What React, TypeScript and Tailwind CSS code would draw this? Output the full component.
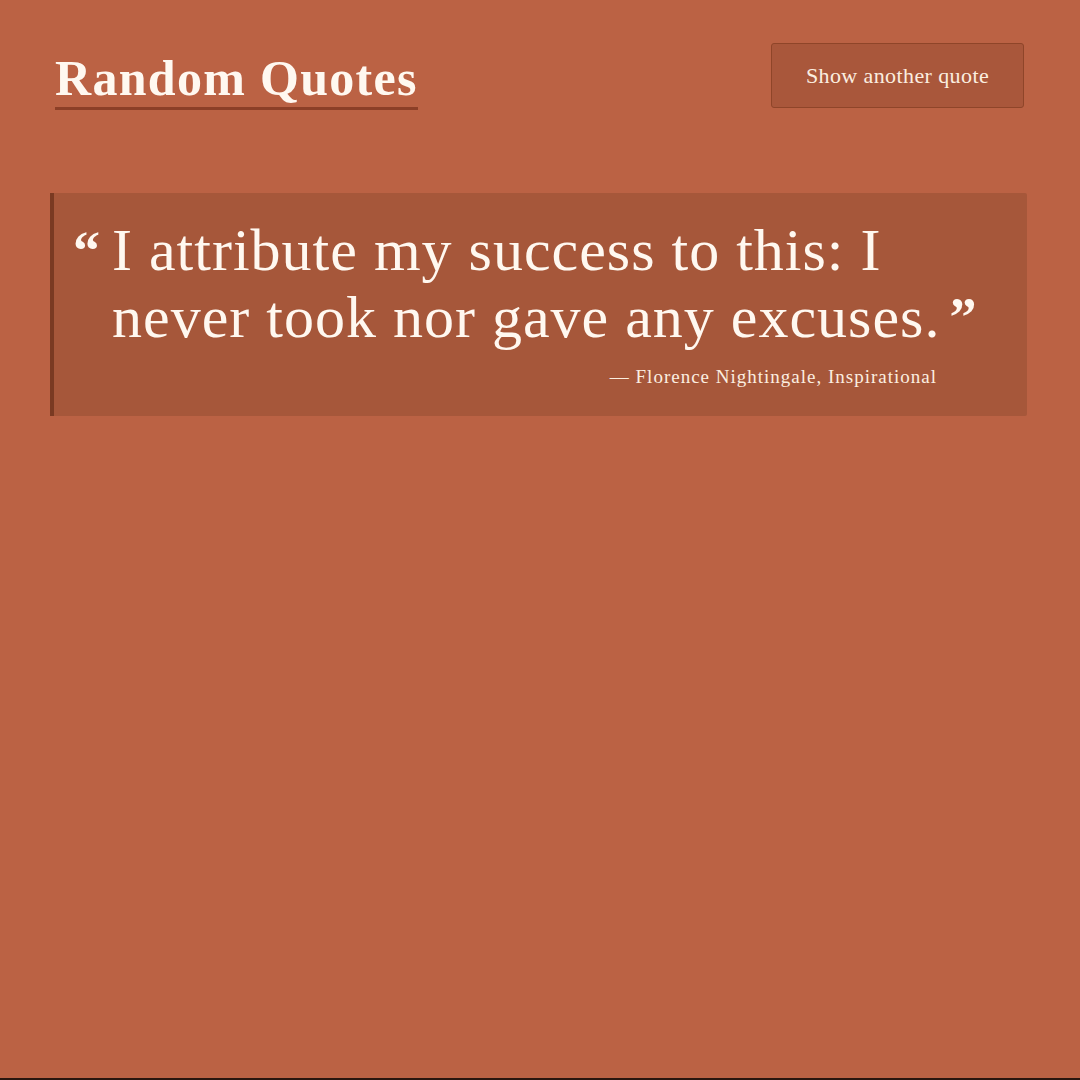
export default function App() {
  const serif = { fontFamily: '"Liberation Serif", "DejaVu Serif", serif' };
  return (
    <div className="min-h-[1080px] w-full bg-[#2a160f] flex flex-col" style={serif}>
      <div className="h-[1078px] bg-[#bb6244] pl-[50px] pr-[53px] pt-[43px]">
        <header className="flex items-start justify-between pl-[5px] pr-[3px]">
          <h1 className="mt-[6px] text-[50px] leading-[58px] font-bold text-[#fff8f0] border-b-[3px] border-[#8c3f27] tracking-[1.3px]">
            Random Quotes
          </h1>
          <button className="h-[65px] w-[253px] rounded-[3px] border border-[#8f4529] bg-[#a9573b] text-[22px] text-[#fbeee0] tracking-[0.4px]">
            Show another quote
          </button>
        </header>
        <section className="mt-[83px] bg-[#a6573a] border-l-4 border-[#7a3a22] rounded-r-[2px] pl-[19px] pr-[47px] pt-[24px] pb-[28px]">
          <div className="flex items-start">
            <span className="mt-[4px] text-[54px] leading-[60px] font-bold text-[#fff8f0] mr-[12px]">“</span>
            <p className="text-[60px] leading-[67px] text-[#fff8f0] tracking-[1px]">
              I attribute my success to this: I<br />
              never took nor gave any excuses.<span className="ml-[9px] text-[54px] font-bold align-top">”</span>
            </p>
          </div>
          <p className="mt-[15px] text-right pr-[43px] text-[19px] leading-[22px] text-[#fbeee0] tracking-[1px]">
            — Florence Nightingale, Inspirational
          </p>
        </section>
      </div>
    </div>
  );
}
